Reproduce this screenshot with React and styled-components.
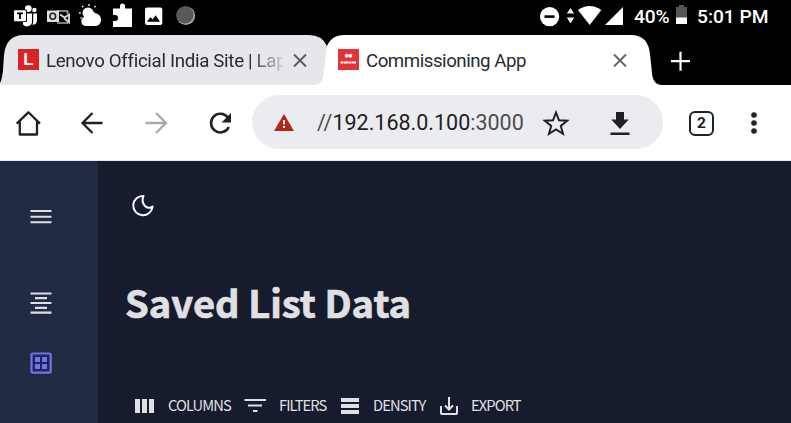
import React from 'react';
import styled, { createGlobalStyle } from 'styled-components';

const GlobalStyle = createGlobalStyle`
  * { box-sizing: border-box; }
  body { margin: 0; background: #161b2d; font-family: Roboto, sans-serif; overflow: hidden; }
`;

const Screen = styled.div`
  width: 791px;
  height: 423px;
  display: flex;
  flex-direction: column;
  overflow: hidden;
`;

const StatusBar = styled.header`
  height: 34px;
  flex: none;
  display: flex;
  align-items: flex-start;
  background: #000;
  color: #fff;
`;

const Glyph = styled.svg`
  display: block;
  flex: none;
  margin-left: ${(p) => p.$gap || 0}px;
`;

const StatusText = styled.span`
  flex: none;
  width: ${(p) => p.$width}px;
  margin-left: ${(p) => p.$gap}px;
  font-size: 19.2px;
  font-weight: 500;
  line-height: 34px;
  letter-spacing: ${(p) => p.$spacing || 0}px;
  white-space: nowrap;
`;

const TabStrip = styled.div`
  height: 51px;
  flex: none;
  display: flex;
  background: #000;
`;

const Tab = styled.div`
  position: relative;
  display: flex;
  flex: none;
  height: 51px;
  color: #2a2b2e;
`;

const InactiveTab = styled(Tab)`
  z-index: 1;
  width: 327px;
  padding-left: 18px;
  background: #e6e7ea;
  clip-path: path('M0 51 V49 Q2 46 3 36 L4 21 Q6 1 24 1 H309 Q322 1 327 12 L323 43 Q322 51 313 51 Z');
`;

const ActiveTab = styled(Tab)`
  width: 350px;
  margin-left: -15px;
  padding-left: 26px;
  background: #fff;
  clip-path: path('M0 51 V43 L10 43 L14 15 Q18 1 32 1 H319 Q336 1 338 20 L340 39 Q341 51 350 51 Z');
`;

const TabTitle = styled.span`
  flex: none;
  width: ${(p) => p.$width}px;
  margin-left: 7px;
  white-space: nowrap;
  font-size: 18.7px;
  line-height: 54px;
  letter-spacing: ${(p) => p.$spacing}px;
  mask-image: ${(p) => (p.$fade ? 'linear-gradient(90deg, #000 86%, rgba(0,0,0,.12) 100%)' : 'none')};
`;

const Favicon = styled.span`
  flex: none;
  width: 21px;
  height: 21px;
  margin-top: 15px;
  background: ${(p) => p.$color};
  color: #fff;
  display: flex;
  flex-direction: column;
  align-items: center;
  justify-content: center;
  font: 700 17px/21px "Liberation Sans", sans-serif;
`;

const Toolbar = styled.nav`
  height: 76px;
  flex: none;
  display: flex;
  align-items: center;
  background: #fff;
  border-bottom: 1px solid #e1eaec;
  color: #202124;
`;

const AddressBar = styled.div`
  display: flex;
  align-items: center;
  flex: none;
  width: 411px;
  height: 54px;
  margin: 0 0 1px 20px;
  padding-left: 22px;
  border-radius: 27px;
  background: #ebecf0;
`;

const Url = styled.span`
  flex: none;
  width: 208px;
  margin-left: 23px;
  font-size: 21.5px;
  line-height: 54px;
  padding-top: 2px;
  white-space: nowrap;
  color: #4b4d51;
  b { font-weight: 400; color: #1f2023; }
`;

const TabCount = styled.span`
  flex: none;
  width: 25px;
  height: 25px;
  margin: 1px 0 0 26px;
  border: 2.5px solid #202124;
  border-radius: 6px;
  text-align: center;
  font-size: 15.5px;
  font-weight: 700;
  line-height: 21px;
`;

const AppBody = styled.div`
  flex: 1;
  display: flex;
`;

const Sidebar = styled.aside`
  width: 98px;
  flex: none;
  padding: 49px 0 0 30px;
  background: #202a42;
`;

const SideItem = styled.div`
  margin-top: ${(p) => p.$space || 0}px;
`;

const Content = styled.main`
  flex: 1;
  padding: 33px 0 0 27px;
  background: #161b2d;
  font-family: "Noto Sans CJK SC", sans-serif;
  color: #e0e0e4;
`;

const Heading = styled.h1`
  margin: 49px 0 0 0;
  height: 70px;
  font-size: 38.1px;
  line-height: 70px;
  font-weight: 700;
  -webkit-text-stroke: 0.7px #e0e0e4;
  white-space: nowrap;
`;

const GridTools = styled.div`
  display: flex;
  align-items: center;
  height: 24px;
  margin: 56px 0 0 10px;
`;

const ToolLabel = styled.span`
  flex: none;
  width: ${(p) => p.$width}px;
  margin-left: ${(p) => p.$gap}px;
  font-size: 14.7px;
  line-height: 24px;
  letter-spacing: -0.9px;
  white-space: nowrap;
`;

const CloseIcon = ({ gap, color }) => (
  <Glyph $gap={gap} width="16" height="51" viewBox="0 0 16 51" stroke={color} strokeWidth="2">
    <path d="M2 20.5l12 12M14 20.5l-12 12" />
  </Glyph>
);

function Status() {
  return (
    <StatusBar>
      <Glyph $gap={14} width="24" height="34" viewBox="14 0 24 34" fill="#fff">
        <circle cx="28.3" cy="8.6" r="3.4" />
        <circle cx="34.4" cy="10" r="2.2" />
        <path d="M23 13.6h9v7.4a5 5 0 0 1-9 3.4z" />
        <path d="M33.2 13.6h3.8v7a4.2 4.2 0 0 1-4.6 4.2q.8-1.4.8-3.2z" />
        <rect x="13.4" y="9.6" width="13.6" height="12.4" rx="1" fill="#000" />
        <rect x="14" y="10.3" width="12" height="11" rx="1" />
        <path d="M17 13.3h6M20 13v6" stroke="#000" strokeWidth="1.8" />
      </Glyph>
      <Glyph $gap={9} width="23" height="34" viewBox="47 0 23 34" fill="none">
        <path d="M57 11h10.5v3M57 23h11.5" stroke="#aaa" strokeWidth="1.7" />
        <path d="M60 14.5l4.5 3 4.5-2.8v7.6l-5-4" stroke="#ddd" strokeWidth="1.8" />
        <rect x="47" y="10.5" width="12" height="11.5" fill="#ddd" />
        <ellipse cx="52.8" cy="16.2" rx="2.8" ry="3" stroke="#222" strokeWidth="1.6" />
      </Glyph>
      <Glyph $gap={9} width="24" height="34" viewBox="79 0 24 34" fill="#fff">
        <circle cx="88" cy="13" r="5.5" />
        <path d="M85.5 26a4.7 4.7 0 0 1-.7-9.2 6.2 6.2 0 0 1 10.7-3.5 6.2 6.2 0 0 1 5.5 6.2c0 4-2.2 6.5-6 6.5z" />
        <path d="M89 4v2M82 6l1.3 1.3M95.5 6l-1 1.3M79 13h1.7M80.5 18.5l1-1" stroke="#fff" strokeWidth="1.3" />
      </Glyph>
      <Glyph $gap={10} width="20" height="34" viewBox="113 0 20 34" fill="#fff">
        <path d="M113 8.5h7V6a2.5 2.5 0 0 1 5 0v2.5h7V27h-19v-6h2a3 3 0 0 0 0-6h-2z" />
      </Glyph>
      <Glyph $gap={12} width="18" height="34" viewBox="145 0 18 34">
        <rect x="145" y="7.5" width="17.3" height="17.5" rx="2" fill="#fff" />
        <path d="M147 21.8l3.5-4.8 2 2.5 3.2-4.3 4.3 6.6z" fill="#000" />
      </Glyph>
      <Glyph $gap={13} width="20" height="34" viewBox="176 0 20 34">
        <circle cx="185.8" cy="15.7" r="9.3" fill="#aaa" />
        <circle cx="185" cy="14.8" r="8.6" fill="#595959" />
      </Glyph>
      <Glyph $gap={344} width="20" height="34" viewBox="540 0 20 34">
        <circle cx="549.6" cy="16.6" r="9.6" fill="#fff" />
        <path d="M544.5 16.6h10" stroke="#000" strokeWidth="2.6" />
      </Glyph>
      <Glyph $gap={6} width="10" height="34" viewBox="566 0 10 34" fill="#eee">
        <path d="M570.5 8l3.7 5.5h-7.4zM570.5 23.5l3.7-6h-7.4z" />
      </Glyph>
      <Glyph $gap={2} width="24" height="34" viewBox="578 0 24 34" fill="#fff">
        <path d="M578 10Q589.5 2 601.3 10L589.7 25z" />
      </Glyph>
      <Glyph $gap={3} width="19" height="34" viewBox="605 0 19 34" fill="#fff">
        <path d="M605 25L623 7v18z" />
      </Glyph>
      <StatusText $gap={10} $width={42} $spacing={-0.1}>40%</StatusText>
      <Glyph $gap={0} width="12" height="34" viewBox="676 0 12 34">
        <path d="M676 7h3V5h5v2h3v11h-11z" fill="#555" />
        <path d="M676 17.5h11V24h-11z" fill="#fff" />
      </Glyph>
      <StatusText $gap={9} $width={80}>5:01 PM</StatusText>
    </StatusBar>
  );
}

function Tabs() {
  return (
    <TabStrip>
      <InactiveTab>
        <Favicon $color="#dc2323">L</Favicon>
        <TabTitle $width={237} $spacing={-0.32} $fade>Lenovo Official India Site | Lap</TabTitle>
        <CloseIcon gap={9} color="#5c5d60" />
      </InactiveTab>
      <ActiveTab>
        <Favicon $color="#e1333a">
          <svg width="19" height="15" viewBox="0 0 19 15" fill="none" stroke="#fff">
            <path d="M7.6 1.8v4M11.4 1.8v4M5.8 3.8h7.4" strokeWidth="1.9" />
            <path d="M1.5 10.5h16" strokeWidth="1.9" strokeDasharray="3 .5 4 .5" />
          </svg>
        </Favicon>
        <TabTitle $width={200} $spacing={-0.48}>Commissioning App</TabTitle>
        <CloseIcon gap={46} color="#66676a" />
      </ActiveTab>
      <Glyph $gap={8} width="21" height="51" viewBox="670 34 21 51" stroke="#fff" strokeWidth="2.2">
        <path d="M671 61.2h19M680.5 51.7v19" />
      </Glyph>
    </TabStrip>
  );
}

function BrowserBar() {
  return (
    <Toolbar>
      <Glyph $gap={15} width="27" height="76" viewBox="15 85 27 76" fill="none" stroke="#202124" strokeWidth="2.3">
        <path d="M16.7 123.6L28.4 112.3L40 123.6M19.8 121.5V134.5H37V121.5" strokeLinejoin="round" />
      </Glyph>
      <Glyph $gap={38} width="24" height="76" viewBox="80 85 24 76" fill="none" stroke="#202124" strokeWidth="2.3">
        <path d="M102.5 123H83M92.5 113L82.5 123L92.5 133" />
      </Glyph>
      <Glyph $gap={40} width="24" height="76" viewBox="144 85 24 76" fill="none" stroke="#aaa" strokeWidth="2.3">
        <path d="M145.5 123H165M156 113L166 123L156 133" />
      </Glyph>
      <Glyph $gap={40} width="24" height="76" viewBox="208 85 24 76" fill="none" stroke="#202124" strokeWidth="2.5">
        <path d="M227.8 117.5A9.3 9.3 0 1 0 228.8 127" />
        <path d="M231 113v9.4h-9.4z" fill="#202124" stroke="none" />
      </Glyph>
      <AddressBar>
        <Glyph width="20" height="54" viewBox="274 95 20 54">
          <path d="M284 114L294 131H274z" fill="#b3261e" />
          <path d="M284 120v4.5M284 126v2" stroke="#fff" strokeWidth="1.8" />
        </Glyph>
        <Url>//<b>192.168.0.100</b>:3000</Url>
        <Glyph $gap={18} width="26" height="54" viewBox="543 95 26 54" fill="none" stroke="#202124" strokeWidth="2">
          <path d="M556 112.5L559 120.3L567.2 120.7L560.8 125.9L563 133.8L556 129.4L549 133.8L551.2 125.9L544.8 120.7L553 120.3z" />
        </Glyph>
        <Glyph $gap={41} width="20" height="54" viewBox="610 95 20 54" fill="#202124">
          <path d="M616 112h8v7.5h4.7L620 129l-8.7-9.5h4.7zM610.5 132.5h19v2.6h-19z" />
        </Glyph>
      </AddressBar>
      <TabCount>2</TabCount>
      <Glyph $gap={36} width="8" height="76" viewBox="750 85 8 76" fill="#202124">
        <circle cx="754" cy="115" r="2.8" />
        <circle cx="754" cy="123" r="2.8" />
        <circle cx="754" cy="131" r="2.8" />
      </Glyph>
    </Toolbar>
  );
}

function Navigation() {
  return (
    <Sidebar>
      <SideItem>
        <Glyph width="22" height="14" viewBox="0 0 22 14" stroke="#dddfe5" strokeWidth="2">
          <path d="M.5 1H21.5M.5 6.7H21.5M.5 12.3H21.5" />
        </Glyph>
      </SideItem>
      <SideItem $space={68}>
        <Glyph width="22" height="23" viewBox="0 0 22 23" stroke="#dddfe5" strokeWidth="2.2">
          <path d="M.5 1.5H21.5M5 6.2H17M.5 11H21.5M5 15.8H17M.5 20.6H21.5" />
        </Glyph>
      </SideItem>
      <SideItem $space={37}>
        <Glyph width="22" height="22" viewBox="0 0 22 22">
          <rect x="1.5" y="1.5" width="19.2" height="19.2" rx="1.3" fill="#202363" stroke="#7375e0" strokeWidth="2.2" />
          <path d="M5 5h5v5H5zM12 5h5v5h-5zM5 12h5v5H5zM12 12h5v5h-5z" fill="#7375e0" />
        </Glyph>
      </SideItem>
    </Sidebar>
  );
}

function SavedList() {
  return (
    <Content>
      <Glyph $gap={6} width="24" height="24" viewBox="131 194 24 24" fill="none" stroke="#fff" strokeWidth="2">
        <path d="M143.5 195.9A9.7 9.7 0 1 0 152.6 206.5C148 210 140 205 143.5 195.9z" strokeLinejoin="round" />
      </Glyph>
      <Heading>Saved List Data</Heading>
      <GridTools>
        <Glyph width="20" height="24" viewBox="135 394 20 24" fill="#e0e0e4">
          <path d="M135 400h5v14h-5zM142 400h5v14h-5zM149 400h5v14h-5z" />
        </Glyph>
        <ToolLabel $gap={13} $width={64}>COLUMNS</ToolLabel>
        <Glyph $gap={12} width="22" height="24" viewBox="244 394 22 24" stroke="#e0e0e4" strokeWidth="2">
          <path d="M244.5 401h21.5M248 406.5h14M253 412h4.5" />
        </Glyph>
        <ToolLabel $gap={13} $width={50}>FILTERS</ToolLabel>
        <Glyph $gap={12} width="18" height="24" viewBox="341 394 18 24" fill="#e0e0e4">
          <path d="M341 399h18v4h-18zM341 405h18v4h-18zM341 411h18v4h-18z" />
        </Glyph>
        <ToolLabel $gap={14} $width={55}>DENSITY</ToolLabel>
        <Glyph $gap={12} width="18" height="24" viewBox="440 394 18 24" fill="none" stroke="#e0e0e4" strokeWidth="2">
          <path d="M441 407v7.2q0 .8.8.8h14.4q.8 0 .8-.8V407M449 398v12M445 406.5l4 4 4-4" />
        </Glyph>
        <ToolLabel $gap={13} $width={60}>EXPORT</ToolLabel>
      </GridTools>
    </Content>
  );
}

export default function App() {
  return (
    <Screen>
      <GlobalStyle />
      <Status />
      <Tabs />
      <BrowserBar />
      <AppBody>
        <Navigation />
        <SavedList />
      </AppBody>
    </Screen>
  );
}
